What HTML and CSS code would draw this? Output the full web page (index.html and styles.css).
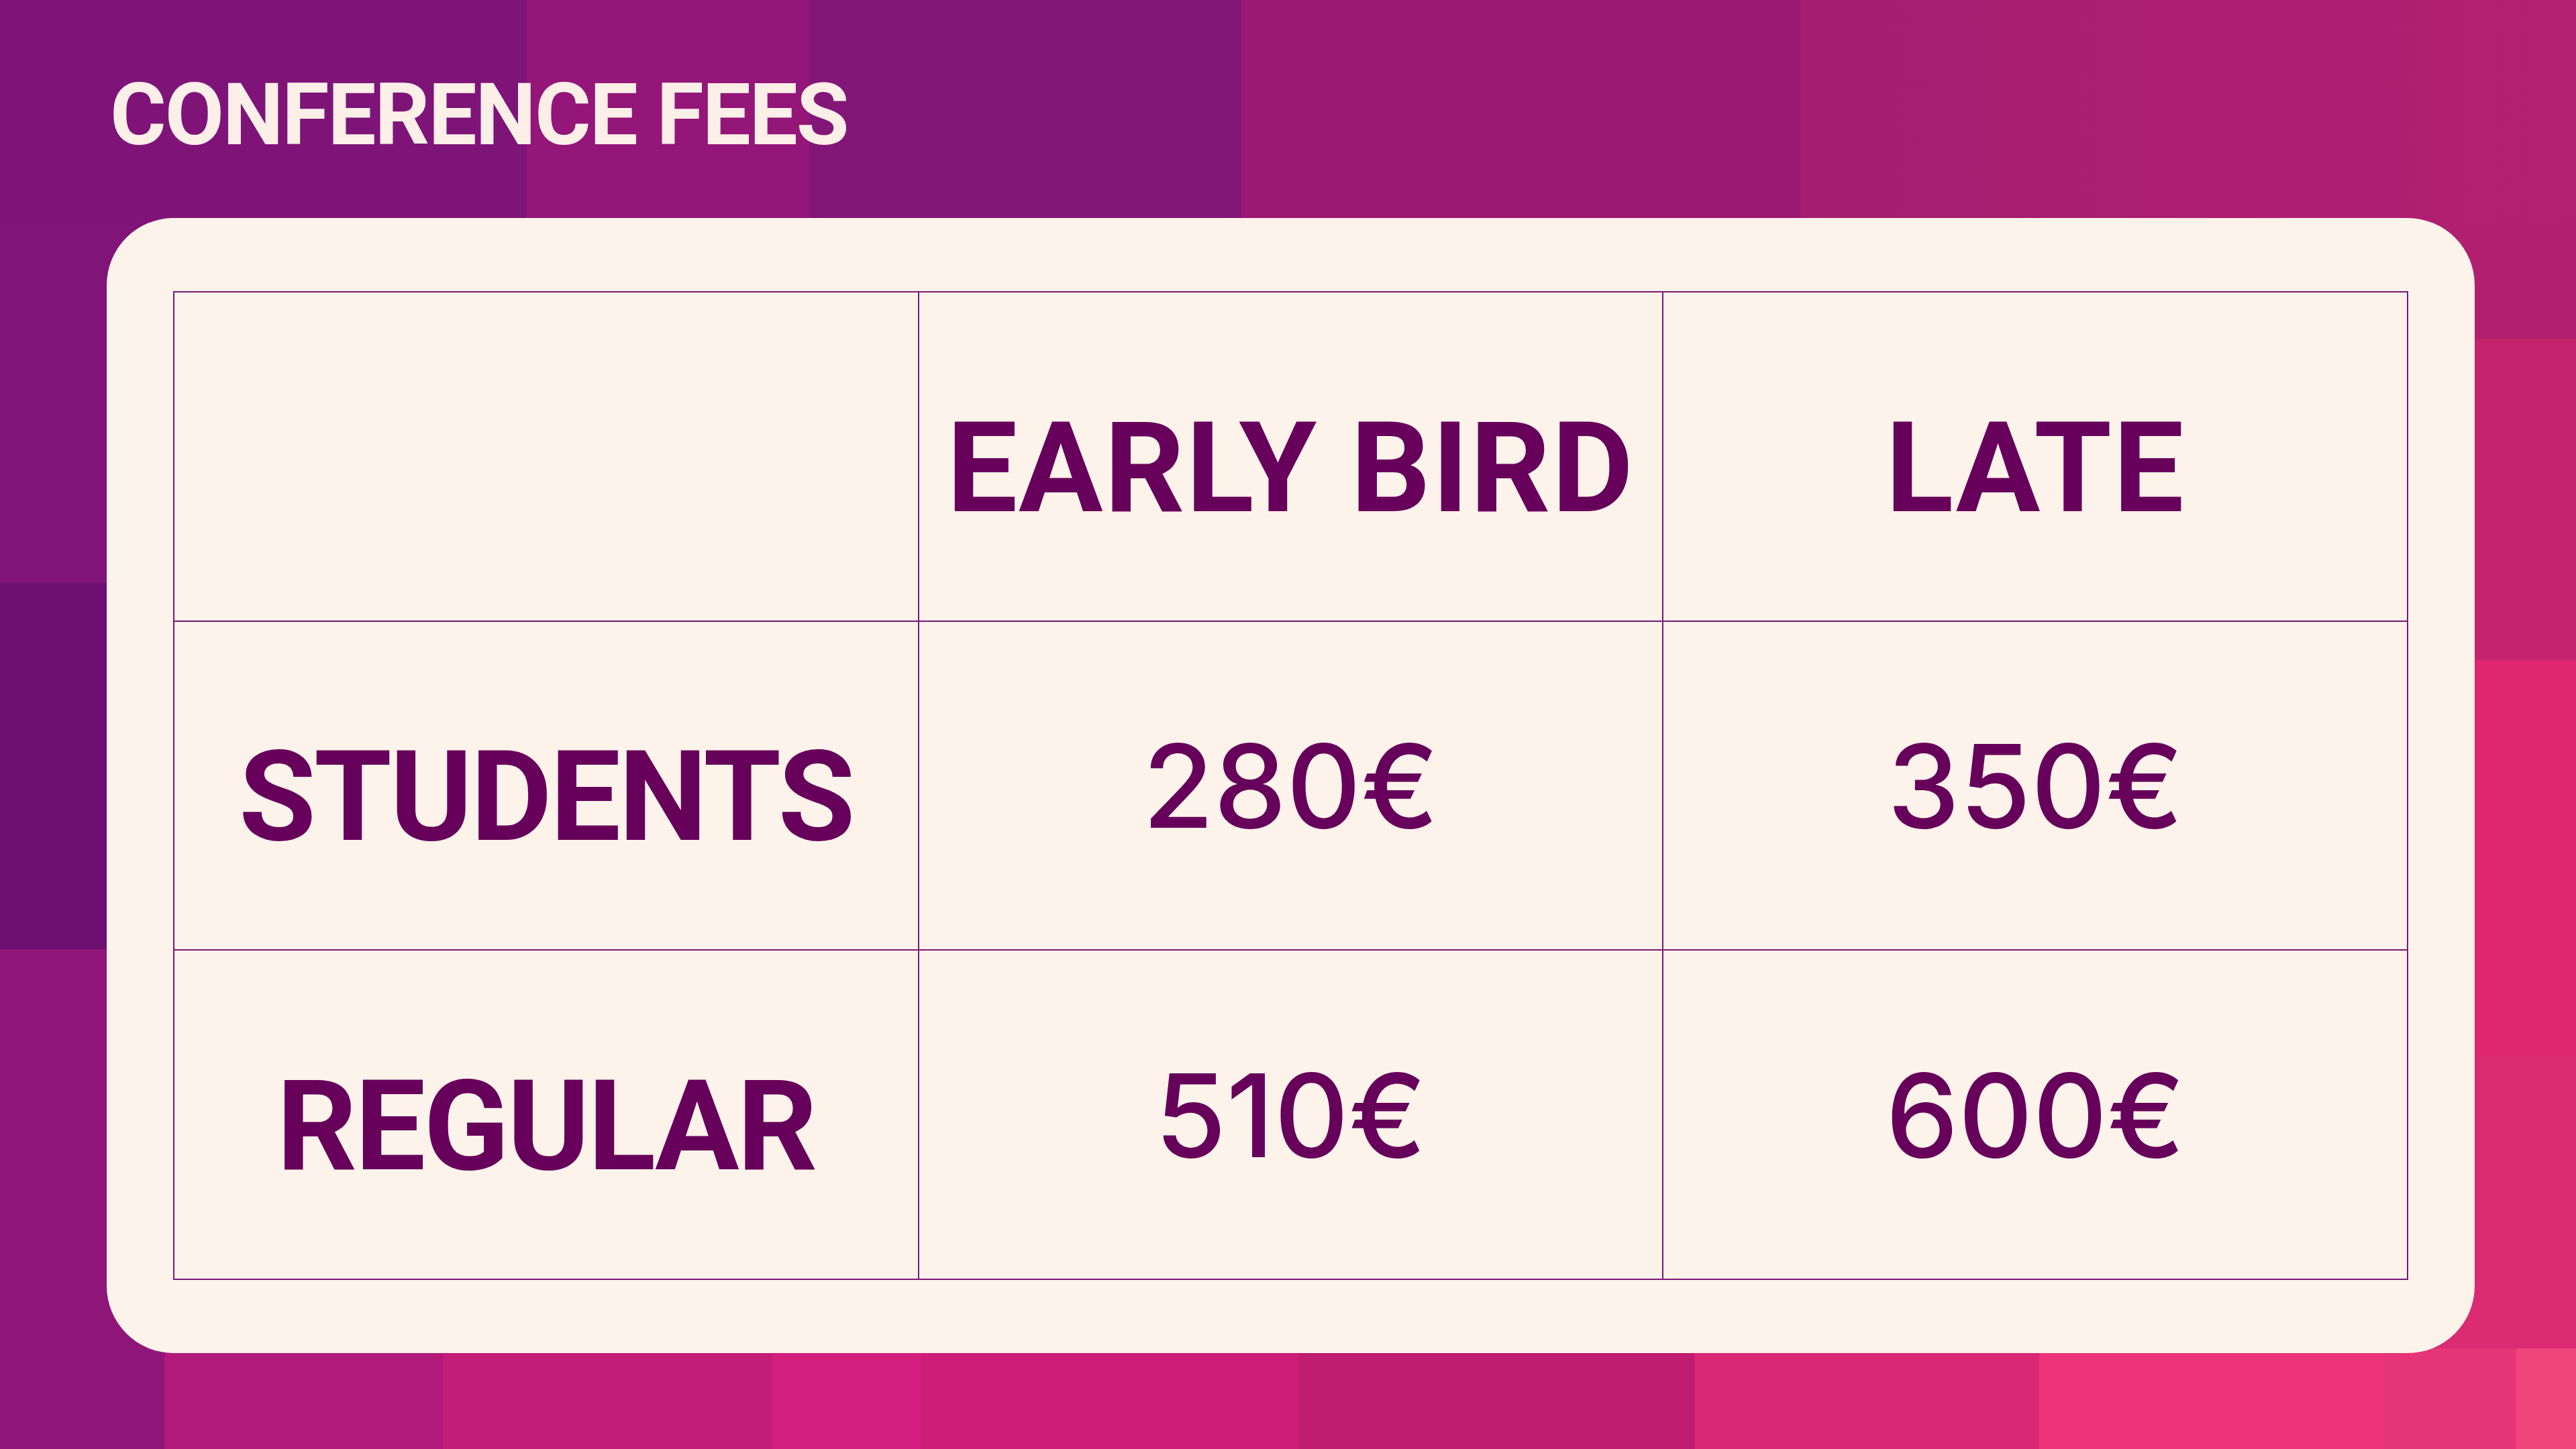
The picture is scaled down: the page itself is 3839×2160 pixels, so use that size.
FILE: index.html
```html
<!DOCTYPE html>
<html lang="en">
<head>
<meta charset="utf-8">
<title>Conference Fees</title>
<link rel="stylesheet" href="styles.css">
</head>
<body>
<div class="slide">
  <h1 class="title">CONFERENCE FEES</h1>
  <div class="card">
    <table class="fees">
      <tr><th></th><th class="col-head">EARLY BIRD</th><th class="col-head">LATE</th></tr>
      <tr><th class="row-head">STUDENTS</th><td>280€</td><td>350€</td></tr>
      <tr><th class="row-head">REGULAR</th><td>510€</td><td>600€</td></tr>
    </table>
  </div>
</div>
</body>
</html>
```
FILE: styles.css
```css
html, body {
  margin: 0;
  width: 3839px;
  height: 2160px;
  overflow: hidden;
}

body {
  background-color: #8f1679;
  background-image:
    linear-gradient(90deg, #7e1478 0 785px, #931678 785px 1206px, #821778 1206px 1850px, #9b1a74 1850px 2684px, #a51d72 2684px, #b22070 100%),
    linear-gradient(90deg, #8e1679 0 245px, #b11a78 245px 660px, #c31c79 660px 1150px, #d21e7c 1150px 1372px, #cc1e79 1372px 1935px, #be1d70 1935px 2525px, #d92876 2525px 3039px, #ed3478 3039px 3554px, #e63576 3554px 3750px, #f0457a 3750px),
    linear-gradient(180deg, #801478 0 549px, #6d1072 549px 1095px, #8f1679 1095px),
    linear-gradient(180deg, #b0206e 0 185px, #c6236f 185px 665px, #df276f 665px 1255px, #d92a72 1255px);
  background-size: 100% 330px, 100% 150px, 340px 1700px, 340px 1700px;
  background-position: 0 0, 0 100%, 0 320px, 100% 320px;
  background-repeat: no-repeat;
  font-family: Roboto, "Liberation Sans", sans-serif;
}

.slide {
  box-sizing: border-box;
  height: 2160px;
  padding: 107px 0 0 159px;
}

.title {
  margin: 0 0 0 5px;
  height: 128px;
  font-size: 128px;
  font-weight: 700;
  line-height: 1;
  letter-spacing: -2px;
  color: #fcefe8;
}

.card {
  box-sizing: border-box;
  margin-top: 90px;
  width: 3529px;
  height: 1692px;
  padding: 109px 99px;
  background: #fef3ea;
  border-radius: 100px;
}

.fees {
  width: 3331px;
  height: 1474px;
  border-collapse: collapse;
  table-layout: fixed;
}

.fees th,
.fees td {
  border: 2px solid #78177a;
  padding: 0;
  text-align: center;
  vertical-align: middle;
  color: #67005a;
  line-height: 1;
}

.fees th {
  padding-top: 36px;
  font-size: 187px;
  font-weight: 700;
}

.fees .col-head {
  letter-spacing: 2px;
}

.fees .row-head {
  letter-spacing: -3px;
}

.fees td {
  font-family: Inter, "DejaVu Sans", sans-serif;
  font-size: 172px;
  font-weight: 500;
  letter-spacing: 0;
}
```
